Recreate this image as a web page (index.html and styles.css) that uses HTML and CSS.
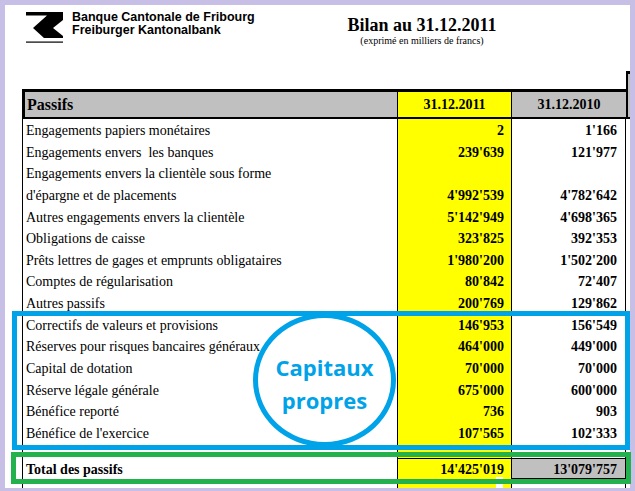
FILE: index.html
```html
<!DOCTYPE html>
<html lang="fr">
<head>
<meta charset="utf-8">
<title>Bilan au 31.12.2011</title>
<link rel="stylesheet" href="styles.css">
</head>
<body>
<div class="page">
  <div class="frame">
    <div class="top">
      <div class="brand">
        <svg class="logo" width="38" height="31" viewBox="0 0 38 31">
          <polygon points="0,0 37,0 37,8 27,16 37,24 37,26 18,26 7,16 21,3.5 0,3.5" fill="#000"/>
          <rect x="0" y="29.5" width="37" height="1.2" fill="#000"/>
        </svg>
        <div class="bank">
          <div>Banque Cantonale de Fribourg</div>
          <div>Freiburger Kantonalbank</div>
        </div>
      </div>
      <div class="title">
        <h1>Bilan au 31.12.2011</h1>
        <p>(exprimé en milliers de francs)</p>
      </div>
    </div>

    <div class="sheet">
      <div class="row head">
        <div class="c lab">Passifs</div>
        <div class="c y">31.12.2011</div>
        <div class="c p">31.12.2010</div>
        <div class="c extra"></div>
      </div>
      <div class="row r"><div class="c lab">Engagements papiers monétaires</div><div class="c y">2</div><div class="c p">1'166</div></div>
      <div class="row r"><div class="c lab">Engagements envers&nbsp; les banques</div><div class="c y">239'639</div><div class="c p">121'977</div></div>
      <div class="row r"><div class="c lab">Engagements envers la clientèle sous forme</div><div class="c y"></div><div class="c p"></div></div>
      <div class="row r"><div class="c lab">d'épargne et de placements</div><div class="c y">4'992'539</div><div class="c p">4'782'642</div></div>
      <div class="row r"><div class="c lab">Autres engagements envers la clientèle</div><div class="c y">5'142'949</div><div class="c p">4'698'365</div></div>
      <div class="row r"><div class="c lab">Obligations de caisse</div><div class="c y">323'825</div><div class="c p">392'353</div></div>
      <div class="row r"><div class="c lab">Prêts lettres de gages et emprunts obligataires</div><div class="c y">1'980'200</div><div class="c p">1'502'200</div></div>
      <div class="row r"><div class="c lab">Comptes de régularisation</div><div class="c y">80'842</div><div class="c p">72'407</div></div>
      <div class="row r"><div class="c lab">Autres passifs</div><div class="c y">200'769</div><div class="c p">129'862</div></div>
      <div class="row r"><div class="c lab">Correctifs de valeurs et provisions</div><div class="c y">146'953</div><div class="c p">156'549</div></div>
      <div class="row r"><div class="c lab">Réserves pour risques bancaires généraux</div><div class="c y">464'000</div><div class="c p">449'000</div></div>
      <div class="row r"><div class="c lab">Capital de dotation</div><div class="c y">70'000</div><div class="c p">70'000</div></div>
      <div class="row r"><div class="c lab">Réserve légale générale</div><div class="c y">675'000</div><div class="c p">600'000</div></div>
      <div class="row r"><div class="c lab">Bénéfice reporté</div><div class="c y">736</div><div class="c p">903</div></div>
      <div class="row r"><div class="c lab">Bénéfice de l'exercice</div><div class="c y">107'565</div><div class="c p">102'333</div></div>
      <div class="row gap"><div class="c lab"></div><div class="c y"></div><div class="c p"></div></div>
      <div class="row total"><div class="c lab">Total des passifs</div><div class="c y">14'425'019</div><div class="c p">13'079'757</div></div>
      <div class="row tail"><div class="c lab"></div><div class="c y"></div><div class="c p"></div></div>
    </div>
  </div>

  <div class="ann green"></div>
  <div class="ann blue"></div>
  <div class="ann circle">Capitaux<br>propres</div>
</div>
</body>
</html>
```

FILE: styles.css
```css
html, body {
  margin: 0;
  padding: 0;
  background: #fff;
}

.page {
  position: relative;
  width: 635px;
  height: 491px;
}

.frame {
  box-sizing: border-box;
  width: 635px;
  height: 491px;
  border-style: solid;
  border-color: #c8bfe7;
  border-width: 5px 5px 3px 5px;
  background: #fff;
  overflow: hidden;
  color: #000;
}

.top {
  display: grid;
  grid-template-columns: 317px 200px;
  height: 84px;
}

.brand {
  display: flex;
  align-items: flex-start;
  gap: 8px;
  padding: 7px 0 0 21px;
}

.logo {
  display: block;
  flex: none;
}

.bank {
  margin-top: -1px;
  font-family: "Liberation Sans", Arial, sans-serif;
  font-weight: bold;
  font-size: 12.5px;
  line-height: 13px;
  white-space: nowrap;
}

.title {
  text-align: center;
  padding-top: 10px;
  font-family: "Liberation Serif", "Times New Roman", serif;
}

.title h1 {
  margin: 0;
  font-size: 18px;
  line-height: 20px;
  font-weight: bold;
}

.title p {
  margin: 0;
  font-size: 10px;
  line-height: 12px;
}

.sheet {
  margin-left: 17px;
  font-family: "Liberation Serif", "Times New Roman", serif;
  font-size: 14px;
}

.row {
  display: grid;
  grid-template-columns: 375px 114px 115px 1fr;
}

.c {
  box-sizing: border-box;
  border-left: 1px solid #000;
  white-space: nowrap;
}

.lab {
  padding-left: 3px;
}

.y {
  background: #ffff00;
  text-align: right;
  padding-right: 7px;
  font-weight: bold;
}

.p {
  text-align: right;
  padding-right: 8px;
  font-weight: bold;
  border-right: 1px solid #000;
}

/* header row */
.head {
  border-bottom: 2px solid #000;
}

.head .c {
  height: 28px;
  border-top: 3px solid #000;
  background: #c0c0c0;
  line-height: 25px;
}

.head .lab {
  border-left-width: 3px;
  padding-left: 2px;
  font-size: 16px;
  font-weight: bold;
}

.head .y {
  background: #ffff00;
  text-align: center;
  padding-right: 0;
}

.head .p {
  text-align: center;
  padding-right: 0;
  border-right: none;
}

.head .extra {
  margin-top: -18px;
  height: 46px;
  border-left: 2px solid #000;
}

/* body rows */
.r {
  height: 21.64px;
  line-height: 21.64px;
}

.r .c {
  padding-top: 1px;
}

.gap {
  height: 14.4px;
}

.total {
  height: 19px;
  line-height: 17px;
}

.total .lab {
  font-weight: bold;
  line-height: 19px;
  padding-top: 2px;
}

.total .y,
.total .p {
  border-top: 1px solid #000;
  border-bottom: 1px solid #000;
  padding-top: 2px;
}

.total .p {
  background: #c0c0c0;
}

.tail {
  height: 20px;
}

.tail .y {
  background: linear-gradient(to right, #ffff00 0 98px, #fff 98px 105px, #ffff00 105px);
}

/* annotations drawn over the sheet */
.ann {
  position: absolute;
  box-sizing: border-box;
}

.green {
  left: 11px;
  top: 452px;
  width: 620px;
  height: 32px;
  border: 5px solid #22b14c;
}

.blue {
  left: 12px;
  top: 311px;
  width: 618px;
  height: 139px;
  border: 5px solid #00a2e8;
}

.circle {
  left: 253px;
  top: 313px;
  width: 143px;
  height: 134px;
  border: 5px solid #00a2e8;
  border-radius: 50%;
  padding-top: 33px;
  text-align: center;
  font-family: "Open Sans", "Noto Sans", sans-serif;
  font-weight: bold;
  font-size: 22px;
  line-height: 33px;
  color: #00a2e8;
}
```
